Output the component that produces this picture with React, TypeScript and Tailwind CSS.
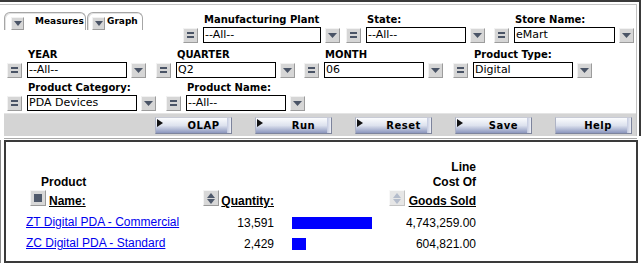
import React from "react";

const EqBtn = () => (
  <div className="w-[15px] h-[15px] shrink-0 bg-[#d6d6d6] border border-t-[#f2f2f2] border-l-[#f2f2f2] border-r-[#9c9c9c] border-b-[#9c9c9c] flex flex-col items-center justify-center gap-[2px]">
    <div className="w-[7px] h-[2px] bg-[#4a5466]" />
    <div className="w-[7px] h-[2px] bg-[#4a5466]" />
  </div>
);

const DdBtn = () => (
  <div className="w-[15px] h-[15px] shrink-0 bg-[#d6d6d6] border border-t-[#f2f2f2] border-l-[#f2f2f2] border-r-[#9c9c9c] border-b-[#9c9c9c] flex items-center justify-center">
    <svg width="9" height="5" viewBox="0 0 9 5">
      <polygon points="0,0 9,0 4.5,5" fill="#4a5466" />
    </svg>
  </div>
);

type FieldProps = { label: string; value: string; wCls: string; mlCls: string };

const Field = ({ label, value, wCls, mlCls }: FieldProps) => (
  <div className={`flex flex-col shrink-0 ${mlCls}`}>
    <div className="h-[14px] pl-[21px] text-[10px] font-bold leading-[14px] whitespace-nowrap font-['DejaVu_Sans',Verdana,sans-serif] text-black">
      {label}
    </div>
    <div className="flex items-center h-[16px]">
      <EqBtn />
      <div
        className={`ml-[5px] h-[16px] border border-black bg-white pl-[1px] text-[11px] leading-[12px] pt-px whitespace-nowrap overflow-hidden font-['DejaVu_Sans',Verdana,sans-serif] text-black ${wCls}`}
      >
        {value}
      </div>
      <div className="ml-[4px]">
        <DdBtn />
      </div>
    </div>
  </div>
);

const TabIcon = () => (
  <div className="w-[13px] h-[13px] shrink-0 bg-[#d6d6d6] border border-t-[#f2f2f2] border-l-[#f2f2f2] border-r-[#9c9c9c] border-b-[#9c9c9c] flex items-center justify-center">
    <svg width="8" height="5" viewBox="0 0 8 5">
      <polygon points="0,0 8,0 4,5" fill="#4a5466" />
    </svg>
  </div>
);

const Tab = ({ label, wCls, padCls, gapCls }: { label: string; wCls: string; padCls: string; gapCls: string }) => (
  <div
    className={`h-[18px] ${wCls} ${padCls} flex items-start border border-b-0 border-[#a6a6a6] rounded-t-[6px] bg-white shadow-[inset_1px_1px_0_#e2e2e2]`}
  >
    <div className="mt-[4px]">
      <TabIcon />
    </div>
    <div
      className={`${gapCls} mt-[2px] text-[9px] leading-[12px] font-bold whitespace-nowrap font-['DejaVu_Sans',Verdana,sans-serif] text-black`}
    >
      {label}
    </div>
  </div>
);

const ActionBtn = ({ label, arrow = true }: { label: string; arrow?: boolean }) => (
  <div className="relative w-[77px] h-[17px] shrink-0 border border-[#7d849c] border-t-[#c8cbd6] border-l-[#aeb3c4] bg-linear-to-b from-[#fbfcfe] via-[#dde2ee] to-[#8b96bd] flex items-center">
    {arrow && (
      <svg className="absolute left-[1px] top-[1px]" width="6" height="8" viewBox="0 0 6 8">
        <polygon points="0,0 6,4 0,8" fill="#111" />
      </svg>
    )}
    <div className="absolute right-0 top-0 bottom-0 w-[4px] bg-linear-to-r from-[#c4cbe0] to-[#eef0f6]" />
    <div
      className={`flex-1 text-center ${arrow ? "pl-[20px]" : "pl-[9px]"} text-[10px] font-bold tracking-[0.5px] leading-[15px] font-['DejaVu_Sans',Verdana,sans-serif] text-black`}
    >
      {label}
    </div>
  </div>
);

const SquareSortIcon = () => (
  <div className="w-[16px] h-[16px] shrink-0 bg-[#d8d8d8] border border-t-[#f4f4f4] border-l-[#f4f4f4] border-r-[#9a9a9a] border-b-[#9a9a9a] flex items-center justify-center">
    <div className="w-[8px] h-[8px] bg-[#4f596b]" />
  </div>
);

const UpDownIcon = ({ light = false }: { light?: boolean }) => (
  <div
    className={`w-[16px] h-[16px] shrink-0 border flex items-center justify-center ${
      light
        ? "bg-[#e6e6e6] border-t-[#f8f8f8] border-l-[#f8f8f8] border-r-[#c4c4c4] border-b-[#c4c4c4]"
        : "bg-[#d8d8d8] border-t-[#f4f4f4] border-l-[#f4f4f4] border-r-[#9a9a9a] border-b-[#9a9a9a]"
    }`}
  >
    <svg width="8" height="11" viewBox="0 0 8 11">
      <polygon points="4,0 8,5 0,5" fill={light ? "#b4bccb" : "#4f596b"} />
      <polygon points="0,6 8,6 4,11" fill={light ? "#b4bccb" : "#4f596b"} />
    </svg>
  </div>
);

const rows = [
  { name: "ZT Digital PDA - Commercial", qty: 13591, cost: "4,743,259.00" },
  { name: "ZC Digital PDA - Standard", qty: 2429, cost: "604,821.00" },
];

export default function App() {
  const maxQty = 13591;
  return (
    <div className="w-[641px] h-[263px] bg-white overflow-hidden font-['Liberation_Sans',Arial,sans-serif] text-black">
      {/* Upper panel */}
      <div className="border-t-2 border-r-2 border-[#3a3a3a] pt-[2px] pr-[2px]">
        <div className="border-t border-r border-[#c4c4c4]">
          {/* Row 1 */}
          <div className="flex items-start mt-[7px]">
            <div className="flex ml-[4px] gap-px">
              <Tab label="Measures" wCls="w-[82px]" padCls="pl-[6px]" gapCls="ml-[11px]" />
              <Tab label="Graph" wCls="w-[56px]" padCls="pl-[4px]" gapCls="ml-[2px]" />
            </div>
            <div className="flex mt-px">
              <Field label="Manufacturing Plant" value="--All--" wCls="w-[118px]" mlCls="ml-[40px]" />
              <Field label="State:" value="--All--" wCls="w-[100px]" mlCls="ml-[6px]" />
              <Field label="Store Name:" value="eMart" wCls="w-[101px]" mlCls="ml-[9px]" />
            </div>
          </div>
          {/* Row 2 */}
          <div className="flex mt-[5px]">
            <Field label="YEAR" value="--All--" wCls="w-[100px]" mlCls="ml-[7px]" />
            <Field label="QUARTER" value="Q2" wCls="w-[100px]" mlCls="ml-[10px]" />
            <Field label="MONTH" value="06" wCls="w-[100px]" mlCls="ml-[9px]" />
            <Field label="Product Type:" value="Digital" wCls="w-[100px]" mlCls="ml-[10px]" />
          </div>
          {/* Row 3 */}
          <div className="flex mt-[3px]">
            <Field label="Product Category:" value="PDA Devices" wCls="w-[110px]" mlCls="ml-[7px]" />
            <Field label="Product Name:" value="--All--" wCls="w-[100px]" mlCls="ml-[10px]" />
          </div>
          {/* Button bar */}
          <div className="ml-[4px] mt-[2px] h-[23px] bg-[#d4d4d4] border-t border-[#e4e4e4] flex items-start pt-[3px] pl-[151px] gap-[23px]">
            <ActionBtn label="OLAP" />
            <ActionBtn label="Run" />
            <ActionBtn label="Reset" />
            <ActionBtn label="Save" />
            <ActionBtn label="Help" arrow={false} />
          </div>
        </div>
      </div>
      <div className="h-px bg-[#a8a8a8] ml-[4px] mr-[4px] mt-[2px]" />
      {/* Lower report box */}
      <div className="flex mt-px h-[123px]">
        <div className="w-px bg-[#8a8a8a]" />
        <div className="ml-[3px] w-[634px] border-2 border-[#3a3a3a] pl-[20px] pt-[18px]">
          {/* Header */}
          <div className="flex items-end text-[12px] font-bold">
            <div className="w-[160px] pl-[4px] flex flex-col">
              <div className="pl-[11px] leading-[15px]">Product</div>
              <div className="flex items-end">
                <div className="mb-[3px]">
                  <SquareSortIcon />
                </div>
                <div className="ml-[3px] leading-[15px] underline">Name:</div>
              </div>
            </div>
            <div className="w-[88px] flex items-end justify-end">
              <div className="mb-[3px]">
                <UpDownIcon />
              </div>
              <div className="ml-[2px] leading-[15px] underline">Quantity:</div>
            </div>
            <div className="ml-[18px] w-[80px]" />
            <div className="w-[104px] flex flex-col items-end">
              <div className="leading-[15px]">Line</div>
              <div className="leading-[15px]">Cost Of</div>
              <div className="flex items-end">
                <div className="mb-[3px]">
                  <UpDownIcon light />
                </div>
                <div className="ml-[4px] leading-[15px] underline">Goods Sold</div>
              </div>
            </div>
          </div>
          {/* Rows */}
          <div className="mt-[3px] flex flex-col text-[12px]">
            {rows.map((r) => (
              <div key={r.name} className="flex items-center h-[21px]">
                <div className="w-[160px] leading-[21px]">
                  <a href="#" className="text-[#0000ee] underline whitespace-nowrap">
                    {r.name}
                  </a>
                </div>
                <div className="w-[88px] text-right">{r.qty.toLocaleString("en-US")}</div>
                <div className="ml-[18px] w-[80px] flex items-center">
                  <div
                    className="h-[12px] bg-[#0000ff]"
                    style={{ width: `${Math.round((80 * r.qty) / maxQty)}px` }}
                  />
                </div>
                <div className="w-[104px] text-right">{r.cost}</div>
              </div>
            ))}
          </div>
        </div>
      </div>
    </div>
  );
}
